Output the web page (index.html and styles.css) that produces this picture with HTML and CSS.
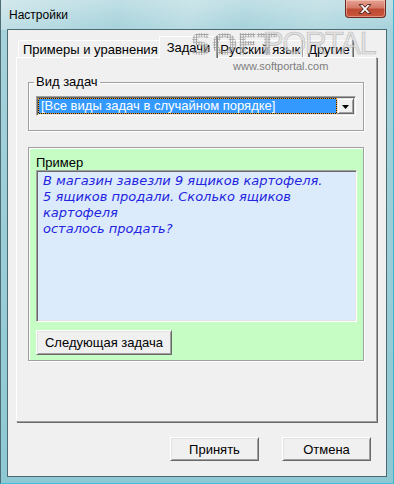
FILE: index.html
```html
<!DOCTYPE html>
<html lang="ru">
<head>
<meta charset="utf-8">
<title>Настройки</title>
<link rel="stylesheet" href="styles.css">
</head>
<body>
<div class="window">
  <div class="titlebar">
    <span class="title">Настройки</span>
    <div class="close">
      <svg width="41" height="18" viewBox="0 0 41 18">
        <path d="M14.5 4.5 L18 4.5 L20.5 7.2 L23 4.5 L26.5 4.5 L22.3 9 L26.5 13.5 L23 13.5 L20.5 10.8 L18 13.5 L14.5 13.5 L18.7 9 Z" fill="#fff" stroke="#4a1a14" stroke-width="1" stroke-linejoin="round"/>
      </svg>
    </div>
  </div>
  <div class="client">
    <div class="tabs">
      <div class="tab">Примеры и уравнения</div>
      <div class="tab active">Задачи</div>
      <div class="tab">Русский язык</div>
      <div class="tab">Другие</div>
    </div>
    <div class="panel">
      <fieldset class="group">
        <legend>Вид задач</legend>
        <div class="combo">
          <div class="combo-value"><span>[Все виды задач в случайном порядке]</span></div>
          <div class="combo-btn">
            <svg width="7" height="4" viewBox="0 0 7 4"><path d="M0 0 H7 L3.5 4 Z" fill="#000"/></svg>
          </div>
        </div>
      </fieldset>
      <div class="example">
        <div class="example-label">Пример</div>
        <div class="task">
          <div>В магазин завезли 9 ящиков картофеля.</div>
          <div>5 ящиков продали. Сколько ящиков</div>
          <div>картофеля</div>
          <div>осталось продать?</div>
        </div>
        <div class="next-row"><button class="btn next">Следующая задача</button></div>
      </div>
    </div>
    <div class="actions">
      <button class="btn action">Принять</button>
      <button class="btn action">Отмена</button>
    </div>
  </div>
  <div class="watermark">
    <span class="wm-soft">SOFT</span><span class="wm-portal">PORTAL</span>
    <span class="wm-url">www.softportal.com</span>
  </div>
</div>
</body>
</html>
```

FILE: styles.css
```css
html, body {
  margin: 0;
  padding: 0;
}
body {
  width: 394px;
  height: 484px;
  overflow: hidden;
  font-family: "Liberation Sans", Arial, sans-serif;
  font-size: 13px;
  color: #000;
  background: #fff;
}
.window {
  position: relative;
  box-sizing: border-box;
  width: 394px;
  height: 484px;
  display: flex;
  flex-direction: column;
  padding: 0 6px 6px 6px;
  border-left: 1px solid #4e6c74;
  border-right: 1px solid #3fb6cf;
  border-bottom: 1px solid #3fc0de;
  background:
    linear-gradient(100deg, rgba(255,255,255,0.3) 0%, rgba(255,255,255,0.1) 20%, rgba(255,255,255,0) 30%, rgba(255,255,255,0.2) 48%, rgba(255,255,255,0) 62%, rgba(255,255,255,0.15) 80%, rgba(255,255,255,0) 100%) top/100% 30px no-repeat,
    linear-gradient(180deg, #c0dfe5 0px, #a6d2db 30px, #8ec8d3 100%);
}
.titlebar {
  height: 29px;
  display: flex;
  justify-content: space-between;
  align-items: flex-start;
}
.title {
  font-size: 12px;
  line-height: 15px;
  padding: 8px 0 0 2px;
  color: #000;
}
.close {
  width: 41px;
  height: 18px;
  margin-right: 1px;
  box-sizing: border-box;
  border: 1px solid #6a2c22;
  border-top: none;
  border-radius: 0 0 4px 4px;
  background: linear-gradient(180deg, #e6a394 0%, #d57a68 45%, #bf4a33 55%, #c9553c 100%);
  box-shadow: inset 0 0 0 1px rgba(255,220,210,0.45);
  display: flex;
}
.close svg {
  display: block;
  margin-left: -1px;
}
.client {
  flex: 1;
  box-sizing: border-box;
  border: 1px solid #4c6a72;
  background: #f0f0f0;
  padding: 0 8px;
  display: flex;
  flex-direction: column;
}
.tabs {
  margin-top: 6px;
  height: 21px;
  display: flex;
  align-items: flex-end;
  padding-left: 2px;
  position: relative;
  z-index: 1;
}
.tab {
  height: 17px;
  box-sizing: border-box;
  line-height: 15px;
  padding: 1px 2px 0 4px;
  border-top: 1px solid #fff;
  border-left: 1px solid #fff;
  border-right: 1px solid #a0a0a0;
  border-radius: 2px 2px 0 0;
  box-shadow: 1px 0 0 #696969;
  white-space: nowrap;
  background: #f0f0f0;
}
.tab.active {
  height: 22px;
  margin: 0 -2px -1px -2px;
  padding: 3px 6px 0 7px;
  position: relative;
  z-index: 2;
}
.tab.active + .tab {
  border-left: none;
  padding-left: 5px;
}
.panel {
  box-sizing: border-box;
  height: 365px;
  width: 361px;
  border-top: 1px solid #fff;
  border-left: 1px solid #fff;
  border-right: 1px solid #a0a0a0;
  border-bottom: 1px solid #a0a0a0;
  box-shadow: 1px 1px 0 #696969;
  padding: 0 12px 0 11px;
  display: flex;
  flex-direction: column;
}
.group {
  margin: 17px 0 0 0;
  padding: 7px 7px 14px 5px;
  border: 1px solid #a0a0a0;
  box-shadow: inset 1px 1px 0 #fff, 1px 1px 0 #fff;
  min-inline-size: 0;
}
.group legend {
  padding: 0 2px;
  line-height: 14px;
}
.combo {
  margin-left: 2px;
  height: 20px;
  box-sizing: border-box;
  display: flex;
  border-top: 1px solid #a0a0a0;
  border-left: 1px solid #a0a0a0;
  border-right: 1px solid #fff;
  border-bottom: 1px solid #fff;
  box-shadow: inset 1px 1px 0 #696969, inset -1px -1px 0 #e3e3e3;
  padding: 1px;
  background: #fff;
}
.combo-value {
  flex: 1;
  background: #3399ff;
  color: #fff;
  box-shadow: inset 0 0 0 1px #1a1a1a;
  outline: 1px dotted #f09a20;
  outline-offset: -1px;
  line-height: 16px;
  padding-left: 3px;
  white-space: nowrap;
  overflow: hidden;
}
.combo-btn {
  width: 17px;
  box-sizing: border-box;
  background: #f0f0f0;
  border-top: 1px solid #e3e3e3;
  border-left: 1px solid #e3e3e3;
  border-right: 1px solid #696969;
  border-bottom: 1px solid #696969;
  box-shadow: inset 1px 1px 0 #fff, inset -1px -1px 0 #a0a0a0;
  display: flex;
  align-items: center;
  justify-content: center;
}
.combo-btn svg {
  display: block;
  margin-top: 1px;
}
.example {
  margin-top: 16px;
  background: #c5fdc5;
  border: 1px solid #a0a0a0;
  box-shadow: inset 1px 1px 0 #fff, 1px 1px 0 #fff;
  padding: 7px 6px 5px 7px;
  display: flex;
  flex-direction: column;
}
.example-label {
  line-height: 15px;
}
.task {
  height: 152px;
  box-sizing: border-box;
  background: #dbebfc;
  border-top: 1px solid #a0a0a0;
  border-left: 1px solid #a0a0a0;
  border-right: 1px solid #fff;
  border-bottom: 1px solid #fff;
  box-shadow: inset 1px 1px 0 #696969, inset -1px -1px 0 #e3e3e3;
  padding: 2px 5px 0 6px;
  font-family: "DejaVu Sans", Verdana, sans-serif;
  font-style: italic;
  font-size: 13px;
  line-height: 16px;
  color: #2424e0;
}
.next-row {
  margin-top: 8px;
  display: flex;
}
.btn {
  font-family: "Liberation Sans", Arial, sans-serif;
  font-size: 13px;
  color: #000;
  background: #f0f0f0;
  box-sizing: border-box;
  border-style: solid;
  border-width: 1px;
  border-color: #fff #696969 #696969 #fff;
  box-shadow: inset 1px 1px 0 #e3e3e3, inset -1px -1px 0 #a0a0a0;
  padding: 0;
  margin: 0;
  border-radius: 0;
}
.next {
  width: 136px;
  height: 25px;
}
.actions {
  margin-top: 15px;
  margin-right: 7px;
  display: flex;
  justify-content: flex-end;
  gap: 23px;
}
.action {
  width: 89px;
  height: 24px;
}
.watermark {
  position: absolute;
  z-index: 10;
  left: 189px;
  top: 28px;
  width: 190px;
  height: 46px;
  pointer-events: none;
}
.wm-soft {
  position: absolute;
  left: 0;
  top: 0;
  font-family: "DejaVu Sans", sans-serif;
  font-weight: bold;
  font-size: 31px;
  line-height: 32px;
  letter-spacing: -1px;
  color: transparent;
  background: radial-gradient(circle, rgba(150,150,150,0.85) 0.9px, transparent 1.1px) 0 0 / 2.6px 2.6px;
  -webkit-background-clip: text;
  background-clip: text;
}
.wm-portal {
  position: absolute;
  left: 73px;
  top: 0;
  font-family: "Liberation Sans", sans-serif;
  font-size: 31px;
  line-height: 32px;
  letter-spacing: -1.5px;
  color: rgba(215,215,215,0.6);
  -webkit-text-stroke: 0.6px rgba(150,150,150,0.55);
}
.wm-url {
  position: absolute;
  left: 43px;
  top: 32px;
  font-family: "Liberation Sans", sans-serif;
  font-size: 11px;
  line-height: 13px;
  color: #7d7d7d;
}
```
